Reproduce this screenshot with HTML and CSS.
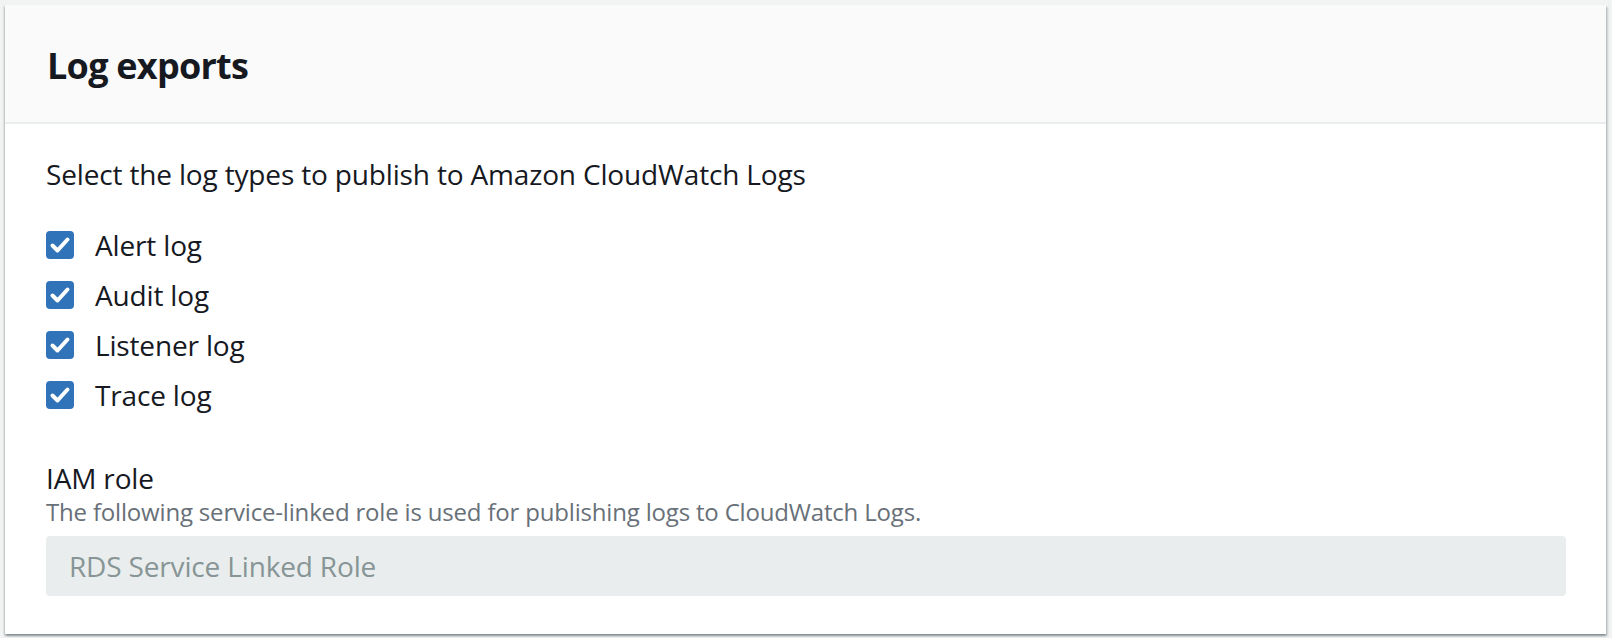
FILE: index.html
```html
<!DOCTYPE html>
<html lang="en">
<head>
<meta charset="utf-8">
<title>Log exports</title>
<link rel="stylesheet" href="styles.css">
</head>
<body>
<section class="card">
  <header class="card-header">
    <h2 class="card-title">Log exports</h2>
  </header>
  <div class="card-body">
    <p class="intro">Select the log types to publish to Amazon CloudWatch Logs</p>
    <ul class="checks">
      <li class="check"><span class="box"><svg viewBox="0 0 28 28" width="28" height="28"><path d="M6.5 14.5l5 5L21.5 8.5" fill="none" stroke="#fff" stroke-width="4" stroke-linecap="round" stroke-linejoin="round"/></svg></span><span class="check-label">Alert log</span></li>
      <li class="check"><span class="box"><svg viewBox="0 0 28 28" width="28" height="28"><path d="M6.5 14.5l5 5L21.5 8.5" fill="none" stroke="#fff" stroke-width="4" stroke-linecap="round" stroke-linejoin="round"/></svg></span><span class="check-label">Audit log</span></li>
      <li class="check"><span class="box"><svg viewBox="0 0 28 28" width="28" height="28"><path d="M6.5 14.5l5 5L21.5 8.5" fill="none" stroke="#fff" stroke-width="4" stroke-linecap="round" stroke-linejoin="round"/></svg></span><span class="check-label">Listener log</span></li>
      <li class="check"><span class="box"><svg viewBox="0 0 28 28" width="28" height="28"><path d="M6.5 14.5l5 5L21.5 8.5" fill="none" stroke="#fff" stroke-width="4" stroke-linecap="round" stroke-linejoin="round"/></svg></span><span class="check-label">Trace log</span></li>
    </ul>
    <div class="field">
      <div class="field-label">IAM role</div>
      <div class="field-desc">The following service-linked role is used for publishing logs to CloudWatch Logs.</div>
      <div class="field-input">RDS Service Linked Role</div>
    </div>
  </div>
</section>
</body>
</html>
```
FILE: styles.css
```css
* { box-sizing: border-box; }
html, body { margin: 0; }
body {
  background: #f2f3f3;
  padding: 5px 6px 4px 5px;
  font-family: "Open Sans", "Noto Sans", sans-serif;
  color: #16191f;
}
.card {
  background: #fff;
  height: 629px;
  box-shadow: 0 2px 2px 0 rgba(0, 28, 36, 0.3), 2px 2px 2px 0 rgba(0, 28, 36, 0.15), -1px 1px 2px 0 rgba(0, 28, 36, 0.15);
  display: flex;
  flex-direction: column;
}
.card-header {
  background: #fafafa;
  height: 119px;
  border-bottom: 2px solid #eaeded;
  padding: 4px 42px 0;
  display: flex;
  align-items: center;
}
.card-title {
  margin: 0;
  font-size: 36px;
  font-weight: 700;
  line-height: 44px;
  letter-spacing: -0.75px;
}
.card-body {
  padding: 30px 40px 0 41px;
}
.intro {
  margin: 0 0 26px;
  font-size: 28px;
  line-height: 40px;
  letter-spacing: -0.16px;
}
.checks {
  list-style: none;
  margin: 0;
  padding: 0;
}
.check {
  display: flex;
  align-items: center;
  height: 50px;
}
.box {
  width: 28px;
  height: 28px;
  border-radius: 4px;
  background: #3073b8;
  display: flex;
}
.check-label {
  margin-left: 21px;
  font-size: 28px;
  line-height: 40px;
  letter-spacing: -0.16px;
}
.field { margin-top: 40px; }
.field-label {
  font-size: 28px;
  line-height: 36px;
  letter-spacing: -0.16px;
}
.field-desc {
  font-size: 24px;
  line-height: 32px;
  color: #687078;
  letter-spacing: -0.18px;
}
.field-input {
  margin-top: 8px;
  height: 60px;
  border-radius: 4px;
  background: #eaeded;
  color: #879596;
  font-size: 28px;
  line-height: 60px;
  padding: 0 23px;
  letter-spacing: -0.16px;
}
```
